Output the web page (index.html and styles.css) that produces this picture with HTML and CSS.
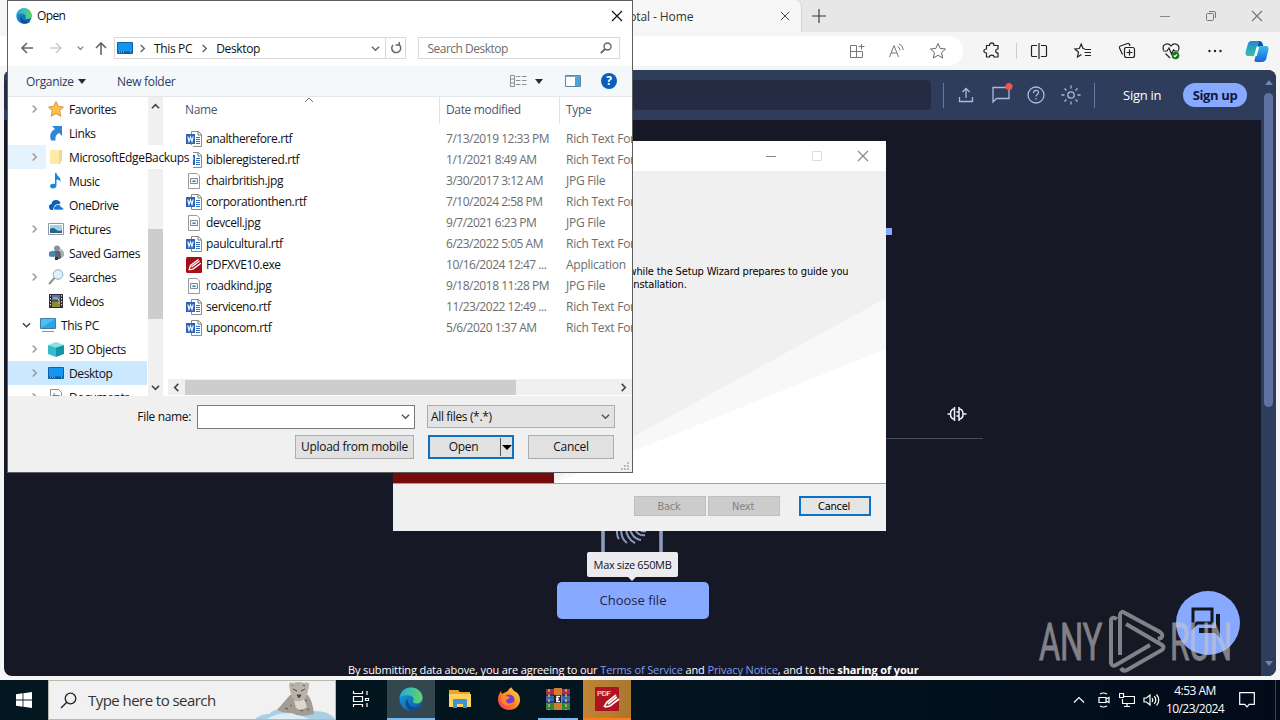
FILE: index.html
```
<!DOCTYPE html>
<html lang="en">
<head>
    <meta charset="utf-8">
    <title>VirusTotal - Home</title>
    <link rel="stylesheet" href="styles.css">
</head>
<body>

<!-- shared icons -->
<svg class="defs" width="0" height="0">
    <defs>
        <linearGradient id="edgeBlue" x1="0" y1="0" x2="1" y2="1"><stop offset="0" stop-color="#1ba5dd"/><stop offset="1" stop-color="#0c50a4"/></linearGradient>
        <linearGradient id="edgeGreen" x1="0" y1="0" x2="1" y2="0"><stop offset="0" stop-color="#25a9e0"/><stop offset="1" stop-color="#62d667"/></linearGradient>
        <linearGradient id="fox" x1="1" y1="0" x2="0" y2="1"><stop offset="0" stop-color="#ffe14a"/><stop offset=".5" stop-color="#ff8a20"/><stop offset="1" stop-color="#f0246b"/></linearGradient>
        <linearGradient id="cop1" x1="0" y1="0" x2="0" y2="1"><stop offset="0" stop-color="#2286d8"/><stop offset="1" stop-color="#35c4a0"/></linearGradient>
        <linearGradient id="cop2" x1="0" y1="0" x2="0" y2="1"><stop offset="0" stop-color="#35bdf0"/><stop offset="1" stop-color="#1d62d8"/></linearGradient>
    </defs>
    <symbol id="edge" viewBox="0 0 24 24">
        <circle cx="12" cy="12" r="11.5" fill="url(#edgeBlue)"/>
        <path d="M.6 11C1.500 4.500 6.500.5 12 .5c7 0 11.500 5 11.500 10 0 4-3 6-6 6-2.500 0-4-1-3.500-2 1.500-2 .5-5.500-4-6C6 8 2 9 .6 11z" fill="url(#edgeGreen)"/>
        <path d="M8.500 12c-.5 5 4 8.500 8.500 8.500 2 0 3.500-.6 5-1.500-2.500 3.500-6 4.500-10 4.500C7 22.500 4.500 15 8.500 12z" fill="#0d4a97"/>
    </symbol>
    <symbol id="chev" viewBox="0 0 10 10"><path d="M3 1l4 4-4 4" fill="none" stroke="currentColor" stroke-width="1.600"/></symbol>
    <symbol id="down" viewBox="0 0 10 10"><path d="M1 3l4 4 4-4" fill="none" stroke="currentColor" stroke-width="1.600"/></symbol>
    <symbol id="close" viewBox="0 0 12 12"><path d="M1 1l10 10M11 1L1 11" fill="none" stroke="currentColor" stroke-width="1.200"/></symbol>
    <symbol id="monitor" viewBox="0 0 16 16"><path d="M.5 2.500h15v11H.5z" fill="#1496f0" stroke="#0d62a8"/><path d="M1 11.500h14V13H1z" fill="#0a568f"/><path d="M2 12.200h1M4 12.200h1M6 12.200h1M13 12.200h1" stroke="#9fd4ff"/></symbol>
    <symbol id="rtf" viewBox="0 0 16 16">
        <path d="M5.500.5h7l3 3v12h-10z" fill="#fff" stroke="#8a8a8a"/><path d="M12 .5v3.500h3.500" fill="none" stroke="#777"/>
        <path d="M10 6.500h4M10 8.500h4M10 10.500h4M10 12.500h4" stroke="#2a6fc9"/>
        <path d="M0 3h9v10H0z" fill="#2a63b8"/><path d="M1.800 5.500l1.200 5 1.500-4.500L6 10.500l1.200-5" fill="none" stroke="#fff" stroke-width="1.100"/>
    </symbol>
    <symbol id="jpg" viewBox="0 0 16 16"><path d="M2.500.5h8.500l2.500 2.500v12.500h-11z" fill="#fff" stroke="#9a9a9a"/><path d="M4.500 5.500h7v5h-7z" fill="#eef4f8" stroke="#7a8b99"/><path d="M6.500 7.500h3v1.500h-3z" fill="#3f78a8"/></symbol>
    <symbol id="pdfx" viewBox="0 0 16 16"><rect width="16" height="16" rx="1.500" fill="#a80e17"/><path d="M3 13l1.500-4.500 8-6M3.300 13l4-1.200 7.500-5.500M5.500 10l8-6" fill="none" stroke="#fff" stroke-width="1.300"/></symbol>
</svg>

<div class="browser">
    <div class="tabs">
        <div class="tab">
            <span class="tab-title">VirusTotal - Home</span>
            <svg class="tab-x"><use href="#close"/></svg>
        </div>
        <svg class="plus" viewBox="0 0 14 14"><path d="M7 0v14M0 7h14" stroke="#333" stroke-width="1.100"/></svg>
        <div class="win-btns">
            <svg width="12" height="12" viewBox="0 0 12 12"><path d="M1 6.500h10" stroke="#888"/></svg>
            <svg width="12" height="12" viewBox="0 0 12 12" fill="none" stroke="#777"><rect x="1.500" y="3.500" width="7" height="7" rx="1"/><path d="M4 1.500h5q1.500 0 1.500 1.500v5"/></svg>
            <svg width="12" height="12"><use href="#close"/></svg>
        </div>
    </div>
    <div class="toolbar">
        <div class="address">
            <svg width="16" height="16" viewBox="0 0 16 16" fill="none" stroke="#777"><path d="M7.500 2.500h-6v12h12v-6M1.500 8.500h12M7.500 2.500v12M12.500 1v5.500M9.500 3.500h6"/></svg>
            <svg width="18" height="16" viewBox="0 0 18 16" fill="none" stroke="#777"><path d="M1.500 14L6 2.500 10.500 14M3 10h6M9.500 3.500q2.500 1 2.500 4M11 .8q4 1.700 4.300 6.200"/></svg>
            <svg width="18" height="18" viewBox="0 0 18 18" fill="none" stroke="#666"><path d="M9 1.500l2.200 5 5.300.5-4 3.700 1.200 5.300L9 13.300 4.300 16l1.200-5.300-4-3.700 5.300-.5z"/></svg>
        </div>
        <svg class="tb ext" viewBox="0 0 18 18"><path d="M3.500 3.500h3c0-3.500 4.500-3.500 4.500 0h4v3.500c-3 0-3 4 0 4v4h-4c0-2.500-4.500-2.500-4.500 0h-3v-4c-3.500 0-3.500-4 0-4z"/></svg>
        <i class="tb-sep"></i>
        <svg class="tb" viewBox="0 0 18 18"><path d="M7 3.500H2.500q-1 0-1 1v9q0 1 1 1H7M11 3.500h4.500q1 0 1 1v9q0 1-1 1H11M9 1v16"/></svg>
        <svg class="tb" viewBox="0 0 18 18"><path d="M11 7L9 6.500 7.200 2 5.300 6.500 1 7l3.500 3.300L3.500 15l4-2.500M11 7.500h6M10.500 10.500H17M11 13.500h6"/></svg>
        <svg class="tb" viewBox="0 0 18 18"><path d="M4.500 12.500L1.500 6q-.5-1.500 1-2l7-2.500q1.500-.5 2 1l.5 1.500M7.500 5.500h7q2 0 2 2v6q0 2-2 2h-6q-2 0-2-2v-7zM11.500 7.500v6M8.500 10.500h6"/></svg>
        <svg class="tb" viewBox="0 0 18 18"><path d="M1.500 8C-.5 2 6 0 9 4c3-4 9.500-2 7.500 4M1 9h4l2-3 2.500 6 2-4 1.500 1h4M3.500 11.500L8 16"/><circle cx="13.500" cy="13.500" r="3.800" fill="#147a22" stroke="none"/><path d="M11.800 13.500l1.200 1.200 2-2.400" stroke="#fff"/></svg>
        <svg class="tb" viewBox="0 0 18 18"><g fill="#222" stroke="none"><circle cx="3.500" cy="9" r="1.200"/><circle cx="9" cy="9" r="1.200"/><circle cx="14.500" cy="9" r="1.200"/></g></svg>
        <svg class="copilot" viewBox="0 0 24 22"><path d="M6 1h8q2 0 1.500 2l-3 10q-1 3-4 3H3Q0 16 .6 12L3 3.500Q3.700 1 6 1z" fill="url(#cop1)"/><path d="M15.500 6H21q3 0 2.400 3.500L21.500 18q-1 4-4.500 4h-6q-2 0-1.500-2l3-10.500q1-3.500 3-3.500z" fill="url(#cop2)"/><path d="M14 1q3 0 3.700 3l.6 2h-3q-2 0-3 3z" fill="#174fb0"/><path d="M14.200 6.500h-2.500L9 16h2.700z" fill="#fff"/></svg>
    </div>

    <div class="page">
        <div class="vt-main">
            <div class="vt-head">
                <div class="vt-search"></div>
                <i class="vt-sep"></i>
                <svg class="vi" viewBox="0 0 20 20"><path d="M3.500 12v4.500h13V12M10 13V4M6.500 7L10 3.500 13.500 7"/></svg>
                <svg class="vi chat" viewBox="0 0 22 22"><path d="M2 19V4.500h16v11H5.500z"/><circle cx="18" cy="3.500" r="3.500" fill="#f4544c" stroke="none"/></svg>
                <svg class="vi" viewBox="0 0 20 20"><circle cx="10" cy="10" r="8"/><path d="M7.500 8c0-3.500 5-3.500 5-.5 0 2-2.500 2-2.500 4M10 13v1.500"/></svg>
                <svg class="vi" viewBox="0 0 20 20"><circle cx="10" cy="10" r="3.200"/><path d="M10 .5v3M10 16.500v3M.5 10h3M16.500 10h3M3.500 3.500l2 2M14.500 14.500l2 2M16.500 3.500l-2 2M3.500 16.500l2-2"/></svg>
                <i class="vt-sep sep2"></i>
                <span class="sign-in">Sign in</span>
                <span class="sign-up">Sign up</span>
            </div>
            <div class="vt-body">
                <i class="logo-bit"></i>
                <svg class="brain" viewBox="0 0 20 16"><path d="M7.500 1v14M7.500 3Q3.500 3 3.500 8t4 5M.5 8h3M12 1v14M12 3q4 0 4 5t-4 5M16 8h3.500M9.500 6H12M9.500 10H12" fill="none" stroke="#eef2ff" stroke-width="1.500"/></svg>
                <i class="rule"></i>
                <svg class="finger" viewBox="0 0 62 60" fill="none" stroke="#8b9bc0"><path d="M2 0v58h58V0" stroke-width="3.600"/><path d="M16 29c0 4 1 7 2 8M20 27c0 7 3 12 6 14M25 25c0 8 3 13 9 16M29 25c0 6 4 12 11 13M34 27c1 4 5 7 10 6M39 27c1 2 3 3 6 2" stroke-width="2"/></svg>
                <div class="tip">Max size 650MB</div>
                <div class="choose">Choose file</div>
                <div class="terms">By submitting data above, you are agreeing to our <a>Terms of Service</a> and <a>Privacy Notice</a>, and to the <b>sharing of your</b></div>
                <div class="chat-btn"><svg width="36" height="32" viewBox="0 0 36 32"><path d="M3 3h19v14H7l-4 4z" fill="none" stroke="#141623" stroke-width="3"/><path d="M26 8h4v24l-5-5H9v-5h17z" fill="#141623"/></svg></div>
            </div>
        </div>
        <div class="vt-scroll">
            <i class="tri up"></i>
            <i class="vt-thumb"></i>
            <i class="tri dn"></i>
        </div>
    </div>
</div>

<div class="setup">
    <div class="setup-title">
        <svg width="12" height="12" viewBox="0 0 12 12"><path d="M1 6.500h10" stroke="#888"/></svg>
        <svg width="12" height="12" viewBox="0 0 12 12"><path d="M1.500 1.500h9v9h-9z" fill="none" stroke="#ddd"/></svg>
        <svg width="12" height="12"><use href="#close"/></svg>
    </div>
    <div class="setup-body">
        <svg class="setup-bg" viewBox="0 0 493 312"><path d="M493 127L161 309v3h332z" fill="#f8f8f8"/><path d="M493 178L161 312h332z" fill="#fff"/></svg>
        <div class="banner"></div>
        <p class="setup-text">Please wait while the Setup Wizard prepares to guide you<br>through the installation.</p>
    </div>
    <div class="setup-foot">
        <span class="sbtn off">Back</span>
        <span class="sbtn off">Next</span>
        <span class="sbtn focus">Cancel</span>
    </div>
</div>

<div class="dialog">
    <div class="d-title">
        <svg width="16" height="16"><use href="#edge"/></svg>
        <span>Open</span>
        <svg class="d-x" width="12" height="12"><use href="#close"/></svg>
    </div>
    <div class="d-nav">
        <svg class="arr" viewBox="0 0 14 14"><path d="M13 7H2M7 2L2 7l5 5"/></svg>
        <svg class="arr dim" viewBox="0 0 14 14"><path d="M1 7h11M7 2l5 5-5 5"/></svg>
        <svg class="mini"><use href="#down"/></svg>
        <svg class="arr up-arr" viewBox="0 0 14 14"><path d="M7 14V2M2 7l5-5 5 5"/></svg>
        <div class="crumbs">
            <svg width="16" height="16"><use href="#monitor"/></svg>
            <svg class="c1"><use href="#chev"/></svg>
            <span>This PC</span>
            <svg class="c2"><use href="#chev"/></svg>
            <span>Desktop</span>
            <svg class="c3"><use href="#down"/></svg>
            <div class="refresh"><svg width="12" height="12" viewBox="0 0 12 12"><path d="M8.500 2.200A4.500 4.500 0 1 1 3 3M5.500 3h3.700V0" fill="none" stroke="#666" stroke-width="1.500"/></svg></div>
        </div>
        <div class="d-search">
            <span>Search Desktop</span>
            <svg width="12" height="12" viewBox="0 0 12 12"><circle cx="7.500" cy="4.500" r="3.500" fill="none" stroke="#666" stroke-width="1.400"/><path d="M5 7L.8 11.200" stroke="#666" stroke-width="1.800"/></svg>
        </div>
    </div>
    <div class="d-cmd">
        <span class="org">Organize</span>
        <i class="caret"></i>
        <span class="newf">New folder</span>
        <svg class="view" viewBox="0 0 17 14"><path d="M.5 1.500h4v11h-4zM.5 5h4M.5 9h4M6 2.500h4.500M12 2.500h4.500M6 6.500h4.500M12 6.500h4.500M6 10.500h4.500M12 10.500h4.500" fill="none" stroke="#8a8f96"/></svg>
        <i class="caret"></i>
        <svg class="pane" viewBox="0 0 16 12"><path d="M.5.5h15v11H.5z" fill="#fff" stroke="#5d87a6"/><path d="M10 2h5v9h-5z" fill="#4ba3e3"/><path d="M1 1.500h14" stroke="#7fa5bf"/></svg>
        <span class="help">?</span>
    </div>
    <div class="d-body">
        <div class="tree">
            <div class="node"><svg class="tw"><use href="#chev"/></svg><svg class="ic" viewBox="0 0 16 16"><path d="M8 .5l2.300 5 5.200.6-3.900 3.600 1.200 5.600L8 12.500l-4.800 2.800 1.200-5.600L.5 6.100l5.200-.6z" fill="#ffc04a" stroke="#d8913a"/></svg><span>Favorites</span></div>
            <div class="node"><i class="tw"></i><svg class="ic" viewBox="0 0 16 16"><path d="M4 1h10v10l-3-3c-3 1.500-4 4-3.500 7.500H3C1 10 3 6.500 7 4z" fill="#2f86d8"/></svg><span>Links</span></div>
            <div class="node hover"><svg class="tw"><use href="#chev"/></svg><div class="over"><svg class="ic" viewBox="0 0 16 16"><path d="M2 1h11v14H2z" fill="#ffe9a8"/><path d="M11 1h3v11h-1.500V15H11z" fill="#f5d98a"/></svg><span>MicrosoftEdgeBackups</span></div></div>
            <div class="node"><i class="tw"></i><svg class="ic" viewBox="0 0 16 16"><path d="M7 0h1.500c0 3.500 5 4 4 9-.6-2-2-2.500-4-2.600V12.500c0 3.500-6.500 4-6.500.6 0-2.200 3-3 5-2z" fill="#1488e0"/></svg><span>Music</span></div>
            <div class="node"><i class="tw"></i><svg class="ic" viewBox="0 0 16 16"><path d="M1 10q0-3 2.500-3Q4 3 8 3t4.500 3.500L7 8l-2 5H3q-2-.5-2-3z" fill="#0c5fb8"/><path d="M6 13q-1.500-3 1.500-4 1-2.500 3.500-1.500 2 .5 2 2.500 2.500 0 2.500 1.800 0 1.200-1.500 1.200z" fill="#1477d4" stroke="#fff" stroke-width=".6"/></svg><span>OneDrive</span></div>
            <div class="node"><svg class="tw"><use href="#chev"/></svg><svg class="ic" viewBox="0 0 16 16"><path d="M.5 2.500h15v11H.5z" fill="#fff" stroke="#8c9aa5"/><path d="M2 4h12v8H2z" fill="#9fd0ee"/><path d="M2 12V8q3-2 6 .5t6 .5v3z" fill="#2e6388"/></svg><span>Pictures</span></div>
            <div class="node"><i class="tw"></i><svg class="ic" viewBox="0 0 16 16"><circle cx="9" cy="3.500" r="3" fill="#87929a"/><path d="M6 6h6l3 5-3 3H7z" fill="#59646d"/><path d="M12 3l4 4v4l-3 1z" fill="#a9b1b7"/><path d="M1 7l4-1.500L8 9l-2 3-5-.5z" fill="#4288ba"/><path d="M7 12h3v3H7z" fill="#2e363c"/></svg><span>Saved Games</span></div>
            <div class="node"><svg class="tw"><use href="#chev"/></svg><svg class="ic" viewBox="0 0 16 16"><path d="M6.500 9L1 15" stroke="#9b8d80" stroke-width="2"/><circle cx="10" cy="5.500" r="4.800" fill="#dff1fb" stroke="#8daabd"/></svg><span>Searches</span></div>
            <div class="node"><i class="tw"></i><svg class="ic" viewBox="0 0 16 16"><path d="M1 1h14v14H1z" fill="#2c2c32"/><path d="M4 2h8v5.500H4z" fill="#5c74b4"/><path d="M4 8.500h8V14H4z" fill="#8f8d32"/><path d="M2.500 2v12M13.500 2v12" stroke="#ddd" stroke-dasharray="1.500 1.500"/><path d="M5 5h4l2 2v4" stroke="#d6d340" fill="none"/></svg><span>Videos</span></div>
            <div class="node root"><svg class="tw open"><use href="#down"/></svg><svg class="ic" viewBox="0 0 16 16"><path d="M.5 1.500h15v10H.5z" fill="#52bdf2" stroke="#3c7fa8"/><path d="M1 11L15 2v9z" fill="#2ca4e6"/><path d="M2 14.500h12" stroke="#8997a3"/></svg><span>This PC</span></div>
            <div class="node"><svg class="tw"><use href="#chev"/></svg><svg class="ic" viewBox="0 0 16 16"><path d="M0 4l8-3 8 3-8 2.500z" fill="#8ce0e8"/><path d="M0 4l8 2.500V16l-8-3z" fill="#35bccc"/><path d="M16 4L8 6.500V16l8-3z" fill="#1494a6"/></svg><span>3D Objects</span></div>
            <div class="node sel"><svg class="tw"><use href="#chev"/></svg><svg class="ic"><use href="#monitor"/></svg><span>Desktop</span></div>
            <div class="node"><svg class="tw"><use href="#chev"/></svg><svg class="ic" viewBox="0 0 16 16"><path d="M2.500.5h8l3 3v12h-11z" fill="#fff" stroke="#8a9199"/><path d="M4.500 6.500h7M4.500 8.500h7M6 4v6" stroke="#3b87c8"/></svg><span>Documents</span></div>
        </div>
        <div class="vscroll">
            <svg viewBox="0 0 10 10"><path d="M1 7l4-4 4 4" fill="none" stroke="#444" stroke-width="1.800"/></svg>
            <i></i>
            <svg viewBox="0 0 10 10"><path d="M1 3l4 4 4-4" fill="none" stroke="#444" stroke-width="1.800"/></svg>
        </div>
        <div class="list">
            <div class="cols">
                <span>Name</span><span>Date modified</span><span>Type</span>
                <svg class="sort" viewBox="0 0 10 6"><path d="M1 5l4-4 4 4" fill="none" stroke="#777"/></svg>
            </div>
            <div class="files">
                <div class="file"><svg><use href="#rtf"/></svg><b>analtherefore.rtf</b><span>7/13/2019 12:33 PM</span><span>Rich Text Format</span></div>
                <div class="file"><svg><use href="#rtf"/></svg><b>bibleregistered.rtf</b><span>1/1/2021 8:49 AM</span><span>Rich Text Format</span></div>
                <div class="file"><svg><use href="#jpg"/></svg><b>chairbritish.jpg</b><span>3/30/2017 3:12 AM</span><span>JPG File</span></div>
                <div class="file"><svg><use href="#rtf"/></svg><b>corporationthen.rtf</b><span>7/10/2024 2:58 PM</span><span>Rich Text Format</span></div>
                <div class="file"><svg><use href="#jpg"/></svg><b>devcell.jpg</b><span>9/7/2021 6:23 PM</span><span>JPG File</span></div>
                <div class="file"><svg><use href="#rtf"/></svg><b>paulcultural.rtf</b><span>6/23/2022 5:05 AM</span><span>Rich Text Format</span></div>
                <div class="file"><svg><use href="#pdfx"/></svg><b>PDFXVE10.exe</b><span>10/16/2024 12:47 ...</span><span>Application</span></div>
                <div class="file"><svg><use href="#jpg"/></svg><b>roadkind.jpg</b><span>9/18/2018 11:28 PM</span><span>JPG File</span></div>
                <div class="file"><svg><use href="#rtf"/></svg><b>serviceno.rtf</b><span>11/23/2022 12:49 ...</span><span>Rich Text Format</span></div>
                <div class="file"><svg><use href="#rtf"/></svg><b>uponcom.rtf</b><span>5/6/2020 1:37 AM</span><span>Rich Text Format</span></div>
            </div>
            <div class="hscroll">
                <svg viewBox="0 0 10 10"><path d="M7 1L3 5l4 4" fill="none" stroke="#444" stroke-width="1.800"/></svg>
                <i></i>
                <svg class="hr" viewBox="0 0 10 10"><path d="M3 1l4 4-4 4" fill="none" stroke="#444" stroke-width="1.800"/></svg>
            </div>
        </div>
    </div>
    <div class="d-foot">
        <div class="f-row">
            <span class="f-label">File name:</span>
            <div class="f-input"><svg><use href="#down"/></svg></div>
            <div class="f-combo"><span>All files (*.*)</span><svg><use href="#down"/></svg></div>
        </div>
        <div class="f-row f-btns">
            <div class="btn upl">Upload from mobile</div>
            <div class="btn open"><span>Open</span><div class="split"><i class="caret"></i></div></div>
            <div class="btn canc">Cancel</div>
        </div>
        <svg class="grip" viewBox="0 0 9 9"><path d="M6 0h2v2H6zM3 3h2v2H3zM6 3h2v2H6zM0 6h2v2H0zM3 6h2v2H3zM6 6h2v2H6z" fill="#bbb"/></svg>
    </div>
</div>

<svg class="watermark" viewBox="0 0 200 70">
    <g fill="#c8c8c8" stroke="#c8c8c8" stroke-width=".9" font-family="Roboto, sans-serif" font-size="52">
        <text x="3" y="55" textLength="63" lengthAdjust="spacingAndGlyphs">ANY</text>
        <text x="134" y="55" textLength="62" lengthAdjust="spacingAndGlyphs">RUN</text>
    </g>
    <path d="M81 14q-5-3-6 1v43q1 4 5 2l34-20M84 50V10q1-5 5-2l35 19q4 3 1 6l-3 1M90 19l36 21q3 2 0 5L91 65q-4 2-6-2" fill="none" stroke="#c8c8c8" stroke-width="4"/>
</svg>

<div class="taskbar">
    <div class="start"><svg width="16" height="16" viewBox="0 0 16 16"><path d="M0 2.300L6.600 1.300V7.600H0zM7.400 1.200L16 0v7.600H7.400zM0 8.400h6.600v6.300L0 13.700zM7.400 8.400H16V16l-8.600-1.200z" fill="#fff"/></svg></div>
    <div class="t-search">
        <svg width="17" height="17" viewBox="0 0 17 17"><circle cx="10.500" cy="6.500" r="5.300" fill="none" stroke="#222" stroke-width="1.300"/><path d="M6.800 10.200L1 16" stroke="#222" stroke-width="1.300"/></svg>
        <span>Type here to search</span>
        <svg class="leopard" viewBox="0 0 80 38">
            <path d="M0 38q6-5 14-5 6-6 18-5 14 4 28 2 14 0 20 8z" fill="#a9cfe4"/><path d="M12 38q12-8 30-5l12 5z" fill="#dcedf6"/>
            <path d="M22 29Q29 21 35 14h18q5 7 6 19-14 4-22-1-9 0-15-3z" fill="#a39c94"/>
            <path d="M34 4q0-4 4-2 5-2 11 0 6-2 5 3l-2 9q-3 6-8 6t-8-6z" fill="#b9b2a9"/>
            <path d="M38 8l4 2M50 8l-4 2M42 14h4l-2 3z" stroke="#4a4540" fill="#4a4540"/><path d="M35 24l2 1M40 22l2 2M47 23l2-1M52 28l2 1M45 29l3 1M30 27l3 1M50 19l2 1M37 4l1 1M48 4l2 1" stroke="#5c554e"/>
            <path d="M39 19q5 3 10-1l3 8q-6 5-11 1z" fill="#ddd7cf"/>
        </svg>
    </div>
    <div class="app"><svg width="18" height="18" viewBox="0 0 18 18" fill="none" stroke="#fff" stroke-width="1.200"><path d="M1.500 1v2.500h9V1M1.500 6.500h9v5h-9zM1.500 17v-2.500h9V17M15 1v4M15 13v4M13.500 8.500h3v2h-3z"/></svg></div>
    <div class="app active"><svg width="24" height="24"><use href="#edge"/></svg></div>
    <div class="app"><svg width="24" height="24" viewBox="0 0 24 24"><path d="M1 3h9l2 2h10v4H1z" fill="#e7a52c"/><path d="M1 7h22v13H1z" fill="#ffd35c"/><path d="M5 13q0-1 1-1h12q1 0 1 1v8h-4v-4H9v4H5z" fill="#3e93d2"/></svg></div>
    <div class="app"><svg width="24" height="24" viewBox="0 0 24 24"><path d="M12 2c2-1 2-2 2-2l3 4c5 2 6 6 6 9 0 6-5 10-11 10S1 19 1 12c0-4 2-6 3-8l1 3c2-2 5-1 7-5z" fill="url(#fox)"/><circle cx="12" cy="13" r="5.500" fill="#763bd3"/><path d="M4 9c4-2 7 0 9 2l-4 2c0 5 6 4 8 1-1 8-14 6-13-5z" fill="#ff8725"/></svg></div>
    <div class="app run"><svg width="24" height="24" viewBox="0 0 24 24"><path d="M0 2h24v7H0z" fill="#a92b4e"/><path d="M0 9h24v7H0z" fill="#3467b4"/><path d="M0 16h24v7H0z" fill="#2d8645"/><path d="M0 8h24M0 15h24" stroke="#14252c"/><path d="M3 2v21M20 2v21" stroke="#d9ba44" stroke-width="1.500" stroke-dasharray="3 2"/><path d="M8 1h8v22H8z" fill="#ce7e2c"/><path d="M8 8h7v8H8z" fill="#222"/><path d="M14 9.500h-3v5h3M10 12h3" fill="none" stroke="#fff" stroke-width="1.500"/></svg></div>
    <div class="app pdf"><svg width="26" height="26" viewBox="0 0 26 26"><rect x="1" y="1" width="24" height="24" rx="1" fill="#b01220"/><text x="3" y="9.500" font-size="8" fill="#fff" font-family="Roboto, sans-serif">PDF</text><path d="M10 21l3-5L22 9M11 21l5-1 9-7M14 18l9-7" fill="none" stroke="#fff" stroke-width="1.600"/></svg></div>
    <div class="tray">
        <svg class="t1" width="12" height="12" viewBox="0 0 12 12"><path d="M1 8.500l5-5 5 5"/></svg>
        <svg class="t2" width="14" height="16" viewBox="0 0 14 16"><path d="M2 5.500h7v5H2zM9 7l3-1.500v5L9 9M3 2q3.500-2 7 0M3 14q3.500 2 7 0"/></svg>
        <svg class="t3" width="16" height="14" viewBox="0 0 16 14"><path d="M5 3.500h10.500v7H3.500V6M.5.5h4v4h-4zM8 10.500v3M5 13.500h6"/></svg>
        <svg class="t4" width="17" height="14" viewBox="0 0 17 14"><path d="M1 5h2.500L7 2v10L3.500 9H1zM9 5q1.500 2 0 4M11.300 3.200q3 3.800 0 7.600M13.500 1.500q4.500 5.500 0 11"/></svg>
        <div class="clock">4:53 AM<br>10/23/2024</div>
        <svg class="t5" width="16" height="16" viewBox="0 0 16 16"><path d="M.7.7h14.600v11.600h-5L8 14.800l-2.300-2.500h-5z"/></svg>
        <i class="peek"></i>
    </div>
</div>

</body>
</html>
```

FILE: styles.css
```
*{
    box-sizing: border-box;
}
body{
    margin: 0;
    width: 1280px;
    height: 720px;
    overflow: hidden;
    position: relative;
    background-color: #e9e9ea;
    font-family: "Open Sans", "Noto Sans", sans-serif;
    font-size: 12px;
    letter-spacing: -0.35px;
    color: #111;
}
svg{
    display: block;
    flex: none;
}
i{
    display: block;
    flex: none;
}
.defs{
    position: absolute;
}

/* browser */
.browser{
    height: 680px;
    background-color: #f5f5f6;
}
.tabs{
    height: 32px;
    background-color: #e7e7e7;
    display: flex;
    align-items: center;
}
.tab{
    width: 802px;
    height: 32px;
    padding-right: 11px;
    background-color: #f7f7f7;
    border-right: 1px solid #d4d4d4;
    border-radius: 0 7px 0 0;
    display: flex;
    align-items: center;
    justify-content: flex-end;
}
.tab-title{
    width: 195px;
    color: #333;
    letter-spacing: -0.1px;
}
.tab-x{
    width: 10px;
    height: 10px;
    color: #444;
}
.tab .tab-title{
    margin-right: -10px;
}
.plus{
    width: 14px;
    height: 14px;
    margin-left: 10px;
}
.win-btns{
    margin-left: auto;
    padding-right: 17px;
    display: flex;
    gap: 34px;
    color: #777;
}
.toolbar{
    height: 38px;
    display: flex;
    align-items: center;
}
.address{
    width: 963px;
    height: 30px;
    padding-right: 16px;
    background-color: #fff;
    border-radius: 0 15px 15px 0;
    display: flex;
    align-items: center;
    justify-content: flex-end;
    gap: 23px;
}
.tb{
    width: 18px;
    height: 18px;
    margin-right: 26px;
    fill: none;
    stroke: #222;
    stroke-width: 1.2;
}
.ext{
    margin: 0 15px 0 20px;
}
.tb-sep{
    width: 1px;
    height: 16px;
    background-color: #ccc;
    margin-right: 13px;
}
.copilot{
    width: 24px;
    height: 22px;
    margin-left: -5px;
}

/* virustotal page */
.page{
    width: 1272px;
    height: 606px;
    margin-left: 4px;
    border-radius: 8px;
    overflow: hidden;
    display: flex;
    background-color: #171825;
}
.vt-main{
    width: 1257px;
}
.vt-head{
    height: 50px;
    background-color: #2f3d5c;
    display: flex;
    align-items: center;
}
.vt-search{
    width: 927px;
    height: 30px;
    background-color: #242b43;
    border-radius: 4px;
    margin-right: 12px;
}
.vt-sep{
    width: 1px;
    height: 25px;
    background-color: #6478a5;
    margin-right: 12px;
}
.sep2{
    margin: 0 28px 0 2px;
}
.vi{
    width: 20px;
    height: 20px;
    margin-right: 15px;
    fill: none;
    stroke: #a9bbe0;
    stroke-width: 1.3;
}
.vi.chat{
    width: 22px;
    height: 22px;
    margin: -2px 13px 0 0;
}
.vi:nth-of-type(4){
    margin-right: 11px;
}
.sign-in{
    width: 60px;
    color: #fff;
    font-size: 13px;
    letter-spacing: -0.25px;
}
.sign-up{
    width: 64px;
    height: 24px;
    line-height: 24px;
    border-radius: 12px;
    background-color: #87a9ff;
    color: #10183c;
    font-size: 13px;
    font-weight: 700;
    text-align: center;
}
.vt-body{
    height: 556px;
    position: relative;
}
/* what shows round the two windows */
.logo-bit, .brain, .rule, .finger, .tip, .choose, .terms, .chat-btn{
    position: absolute;
}
.logo-bit{
    left: 881px;
    top: 108px;
    width: 7px;
    height: 7px;
    background-color: #87a9ff;
}
.brain{
    left: 943px;
    top: 286px;
    width: 20px;
    height: 16px;
}
.rule{
    left: 280px;
    top: 318px;
    width: 699px;
    height: 1px;
    background-color: #454c63;
}
.finger{
    left: 597px;
    top: 382px;
    width: 62px;
    height: 60px;
}
.tip{
    left: 583px;
    top: 432px;
    width: 91px;
    height: 25px;
    line-height: 25px;
    background-color: #ececf0;
    border-radius: 2px;
    text-align: center;
    font-size: 11px;
    letter-spacing: -0.35px;
}
.tip::after{
    content: "";
    position: absolute;
    left: 41px;
    top: 25px;
    border: 4px solid transparent;
    border-top-color: #ececf0;
    border-bottom: 0;
}
.choose{
    left: 553px;
    top: 462px;
    width: 152px;
    height: 37px;
    line-height: 37px;
    border-radius: 5px;
    background-color: #87a9ff;
    color: #1c2547;
    font-size: 13px;
    letter-spacing: 0;
    text-align: center;
}
.terms{
    left: 344px;
    top: 542px;
    white-space: nowrap;
    color: #fff;
    font-size: 11px;
    line-height: 16px;
    letter-spacing: -0.13px;
}
.terms a{
    color: #7f9df0;
}
.chat-btn{
    left: 1172px;
    top: 471px;
    width: 64px;
    height: 64px;
    border-radius: 50%;
    background-color: #87a9ff;
    display: flex;
    justify-content: center;
    padding-top: 15px;
}
.vt-scroll{
    width: 15px;
    background-color: #2f3d5c;
    display: flex;
    flex-direction: column;
    align-items: center;
    padding: 10px 0 10px;
}
.vt-thumb{
    width: 9px;
    height: 314px;
    margin-top: 8px;
    border-radius: 5px;
    background-color: #60729f;
}
.tri{
    border: 4px solid transparent;
}
.up{
    border-top: 0;
    border-bottom: 5px solid #7184b0;
}
.dn{
    border-bottom: 0;
    border-top: 5px solid #7184b0;
    margin-top: auto;
}

/* setup wizard */
.setup{
    position: absolute;
    left: 393px;
    top: 141px;
    width: 493px;
    height: 390px;
    background-color: #f0f0f0;
    font-family: "DejaVu Sans Condensed", "DejaVu Sans", sans-serif;
    font-stretch: condensed;
    font-size: 11px;
    letter-spacing: -0.25px;
    color: #000;
}
.setup-title{
    height: 29px;
    padding-right: 17px;
    background-color: #fff;
    border-bottom: 0;
    color: #888;
    display: flex;
    align-items: center;
    justify-content: flex-end;
    gap: 33px;
    height: 30px;
}
.setup-title svg:first-child{
    margin-right: 1px;
}
.setup-title svg:nth-child(2){
    margin-right: 1px;
}
.setup-body{
    height: 313px;
    position: relative;
    display: flex;
    border-bottom: 1px solid #a0a0a0;
}
.setup-bg{
    position: absolute;
    left: 0;
    top: 0;
    width: 493px;
    height: 312px;
}
.banner{
    width: 161px;
    height: 312px;
    background-color: #760b0b;
    position: relative;
}
.setup-text{
    position: relative;
    margin: 94px 0 0 17px;
    line-height: 13px;
    white-space: nowrap;
    letter-spacing: -0.14px;
}
.setup-foot{
    display: flex;
    padding: 12px 0 0 241px;
    gap: 2px;
}
.sbtn{
    width: 72px;
    height: 20px;
    line-height: 19px;
    padding-right: 2px;
    text-align: center;
    border: 1px solid #bfbfbf;
}
.off{
    background-color: #ccc;
    color: #838383;
}
.focus{
    margin-left: 17px;
    border: 2px solid #0b72c6;
    background-color: #e5e5e5;
    line-height: 17px;
}

/* open dialog */
.dialog{
    position: absolute;
    left: 7px;
    top: 0;
    width: 626px;
    height: 473px;
    border: 1px solid #5e5e5e;
    background-color: #fff;
    display: flex;
    flex-direction: column;
    overflow: hidden;
}
.d-title{
    height: 29px;
    display: flex;
    align-items: center;
    gap: 5px;
    padding: 0 9px 0 8px;
}
.d-title span{
    letter-spacing: -0.6px;
}
.d-x{
    margin-left: auto;
}
.d-nav{
    height: 36px;
    display: flex;
    align-items: center;
    padding: 0 12px;
}
.arr{
    width: 14px;
    height: 14px;
    fill: none;
    stroke: #666;
    stroke-width: 1.6;
    margin-right: 15px;
}
.dim{
    stroke: #ccc;
}
.mini{
    width: 7px;
    height: 8px;
    color: #777;
    margin: 0 10px 0 -1px;
}
.up-arr{
    margin-right: 6px;
}
.crumbs{
    width: 293px;
    height: 22px;
    border: 1px solid #d9d9d9;
    display: flex;
    align-items: center;
    padding-left: 2px;
    margin-right: 12px;
}
.crumbs .c1, .crumbs .c2, .crumbs .c3{
    width: 9px;
    height: 9px;
    color: #666;
}
.crumbs .c1{
    margin: 0 7px 0 5px;
}
.crumbs .c2{
    margin: 0 7px 0 8px;
}
.crumbs .c3{
    margin-left: auto;
    margin-right: 5px;
}
.refresh{
    width: 20px;
    height: 20px;
    border-left: 1px solid #d9d9d9;
    display: flex;
    align-items: center;
    justify-content: center;
}
.d-search{
    width: 202px;
    height: 22px;
    border: 1px solid #d9d9d9;
    padding: 0 7px 0 8px;
    display: flex;
    align-items: center;
    justify-content: space-between;
    color: #6d6d6d;
    letter-spacing: -0.5px;
}
.d-cmd{
    height: 31px;
    background-color: #f5f8fb;
    border-bottom: 1px solid #e3e8ec;
    display: flex;
    align-items: center;
    padding-left: 18px;
    color: #2c3a5e;
    letter-spacing: -0.3px;
}
.org{
    width: 52px;
}
.newf{
    width: 424px;
    padding-left: 31px;
}
.caret{
    border: 4px solid transparent;
    border-top: 5px solid #222b3d;
    border-bottom: 0;
}
.view{
    width: 17px;
    height: 14px;
    margin-right: 8px;
}
.view + .caret{
    margin-right: 22px;
}
.pane{
    width: 16px;
    height: 12px;
    margin-right: 20px;
}
.help{
    width: 16px;
    height: 16px;
    line-height: 16px;
    border-radius: 50%;
    background-color: #0a5fb8;
    color: #fff;
    font-weight: 700;
    text-align: center;
}
.d-body{
    height: 299px;
    display: flex;
    overflow: hidden;
}
.tree{
    width: 140px;
    height: 299px;
}
.node{
    width: 139px;
    height: 24px;
    padding-left: 22px;
    display: flex;
    align-items: center;
    white-space: nowrap;
    letter-spacing: -0.4px;
}
.node .tw{
    width: 9px;
    height: 10px;
    margin-right: 9px;
    color: #999;
}
.node .ic{
    width: 16px;
    height: 16px;
    margin-right: 5px;
}
.root{
    padding-left: 14px;
}
.node .open{
    color: #444;
}
.sel{
    background-color: #cce8ff;
}
.hover{
    background-color: #e5f3ff;
}
.hover .over{
    position: relative;
    z-index: 2;
    height: 24px;
    margin-left: -2px;
    padding: 0 4px 0 2px;
    background-color: #fff;
    display: flex;
    align-items: center;
    letter-spacing: -0.35px;
}
.vscroll{
    width: 15px;
    background-color: #f0f0f0;
    display: flex;
    flex-direction: column;
    align-items: center;
}
.vscroll svg{
    width: 9px;
    height: 9px;
    margin-top: 5px;
}
.vscroll i{
    width: 15px;
    height: 90px;
    margin: 118px 0 59px;
    background-color: #cdcdcd;
}
.list{
    flex: 1;
    height: 298px;
    margin-left: 5px;
    display: flex;
    flex-direction: column;
    overflow: hidden;
}
.cols{
    height: 27px;
    position: relative;
    display: grid;
    grid-template-columns: 254px 120px 1fr;
    margin-left: 17px;
    color: #4c5770;
    line-height: 26px;
    letter-spacing: -0.35px;
}
.cols span + span{
    border-left: 1px solid #e2e2e2;
    padding-left: 6px;
}
.sort{
    position: absolute;
    left: 119px;
    top: 0;
    width: 10px;
    height: 6px;
}
.files{
    padding: 4px 0 0 18px;
    flex: 1;
}
.file{
    height: 21px;
    display: grid;
    grid-template-columns: 20px 240px 120px 90px;
    align-items: center;
    white-space: nowrap;
    color: #6d6d6d;
    letter-spacing: -0.48px;
}
.file svg{
    width: 16px;
    height: 16px;
}
.file span:last-child{
    letter-spacing: -0.25px;
}
.file b{
    font-weight: 400;
    color: #111;
    letter-spacing: -0.4px;
}
.hscroll{
    height: 16px;
    background-color: #f0f0f0;
    display: flex;
    align-items: center;
}
.hscroll svg{
    width: 9px;
    height: 9px;
    margin: 0 4px;
}
.hscroll i{
    width: 331px;
    height: 15px;
    background-color: #cdcdcd;
}
.hscroll .hr{
    margin-left: auto;
}
.d-foot{
    flex: 1;
    position: relative;
    background-color: #f0f0f0;
    padding-top: 9px;
}
.f-row{
    display: flex;
    align-items: center;
    height: 23px;
}
.f-label{
    width: 183px;
    text-align: right;
    margin-right: 6px;
}
.f-input, .f-combo{
    height: 24px;
    border: 1px solid #7a7a7a;
    background-color: #fff;
    display: flex;
    align-items: center;
    justify-content: flex-end;
    padding: 0 4px 0 3px;
}
.f-input{
    width: 218px;
    margin-right: 12px;
}
.f-combo{
    width: 188px;
    height: 23px;
    background-color: #e3e3e3;
    border-color: #adadad;
    justify-content: space-between;
}
.f-input svg, .f-combo svg{
    width: 9px;
    height: 9px;
    color: #555;
}
.f-btns{
    margin-top: 7px;
    padding-left: 287px;
    height: 24px;
}
.btn{
    height: 24px;
    line-height: 22px;
    text-align: center;
    border: 1px solid #adadad;
    background-color: #e1e1e1;
    letter-spacing: -0.3px;
    white-space: nowrap;
}
.upl{
    width: 119px;
    margin-right: 14px;
}
.btn.open{
    width: 86px;
    margin-right: 14px;
    border: 2px solid #0b72c6;
    display: flex;
    line-height: 20px;
}
.btn.open span{
    width: 70px;
    padding-right: 3px;
}
.split{
    border-left: 1px solid #555;
    width: 12px;
    height: 18px;
    margin-top: 1px;
    display: flex;
    align-items: center;
    justify-content: center;
}
.split .caret{
    border-width: 5px 5px 0;
    border-top-color: #000;
}
.canc{
    width: 86px;
}
.grip{
    position: absolute;
    right: 2px;
    bottom: 1px;
    width: 9px;
    height: 9px;
}

.watermark{
    position: absolute;
    left: 1036px;
    top: 605px;
    width: 200px;
    height: 70px;
    opacity: 0.6;
}

/* taskbar */
.taskbar{
    height: 40px;
    background: linear-gradient(90deg, #02171f, #03141e 55%, #020b1a);
    display: flex;
}
.start{
    width: 48px;
    display: flex;
    align-items: center;
    justify-content: center;
}
.t-search{
    width: 288px;
    height: 40px;
    background-color: #f1f1f1;
    border: 1px solid #b9b9ae;
    display: flex;
    align-items: center;
    padding-left: 11px;
    font-size: 15px;
    letter-spacing: -0.55px;
    color: #333;
}
.t-search span{
    margin-left: 11px;
    white-space: nowrap;
}
.leopard{
    width: 80px;
    height: 38px;
    margin-left: auto;
}
.app{
    width: 49px;
    height: 40px;
    display: flex;
    align-items: center;
    justify-content: center;
    border-bottom: 2px solid transparent;
}
.app + .app{
    width: 48px;
    margin-right: 1px;
}
.t-search + .app{
    margin-right: 2px;
}
.active{
    background-color: #33474e;
    border-bottom-color: #76b9ed;
}
.app.run{
    width: 40px;
    margin: 0 5px 0 4px;
}
.run{
    border-bottom-color: #76b9ed;
}
.app.pdf{
    margin: 0;
    background: linear-gradient(90deg, #c08437, #a9772f);
    border-bottom-color: #ff7d14;
}
.tray{
    margin-left: auto;
    display: flex;
    align-items: center;
    width: 207px;
    color: #fff;
}
.tray svg{
    fill: none;
    stroke: #fff;
    stroke-width: 1.2;
}
.t1{
    margin-right: 12px;
}
.t2{
    margin-right: 8px;
}
.t3{
    margin-right: 8px;
}
.clock{
    width: 66px;
    margin: 0 7px 0 2px;
    text-align: center;
    line-height: 18px;
    letter-spacing: -0.55px;
}
.t5{
    margin-left: 4px;
}
.peek{
    width: 1px;
    height: 40px;
    margin-left: 20px;
    background-color: #39414d;
}
```
